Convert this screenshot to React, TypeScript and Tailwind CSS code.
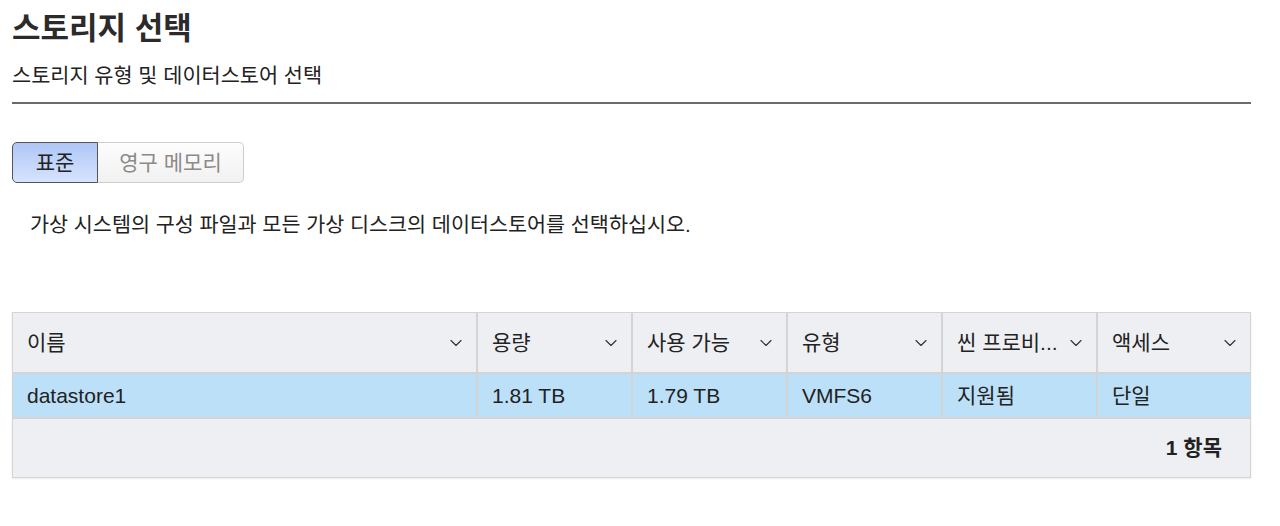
import { ChevronDown } from "lucide-react";

const columns = [
  { label: "이름", width: "w-[465px]" },
  { label: "용량", width: "w-[155px]" },
  { label: "사용 가능", width: "w-[155px]" },
  { label: "유형", width: "w-[155px]" },
  { label: "씬 프로비...", width: "w-[155px]" },
  { label: "액세스", width: "flex-1" },
];

const row = ["datastore1", "1.81 TB", "1.79 TB", "VMFS6", "지원됨", "단일"];

const App = () => {
  return (
    <div
      className="w-[1280px] h-[526px] bg-white text-[#333] overflow-hidden"
      style={{ fontFamily: '"Liberation Sans", "Noto Sans CJK KR", sans-serif' }}
    >
      <div className="pl-3 pr-[29px]">
        <h1 className="pt-[11px] text-[31px] leading-[36px] font-bold text-[#2b2b2b]">
          스토리지 선택
        </h1>
        <p className="mt-[16px] text-[20.8px] leading-[26px] text-[#222]">
          스토리지 유형 및 데이터스토어 선택
        </p>
        <div className="mt-[13px] h-[2px] bg-[#6b6b6b]" />

        <div className="mt-[38px] flex h-[41px] w-[232px] text-[21px]">
          <button className="w-[86px] rounded-l-[5px] border border-[#555] bg-gradient-to-b from-[#aec6f7] to-[#d6e4fc] text-[#222]">
            표준
          </button>
          <button className="flex-1 rounded-r-[5px] border border-l-0 border-[#ccc] bg-gradient-to-b from-[#fdfdfd] to-[#f1f1f1] text-[#8a8a8a]">
            영구 메모리
          </button>
        </div>

        <p className="mt-[29px] pl-[18px] text-[20.7px] leading-[26px] text-[#222]">
          가상 시스템의 구성 파일과 모든 가상 디스크의 데이터스토어를 선택하십시오.
        </p>

        <div className="mt-[74px] border border-[#d4d4d4] bg-[#eeeff2] shadow-[0_1px_2px_rgba(0,0,0,0.08)] text-[21px] text-[#222]">
          <div className="flex h-[59px]">
            {columns.map((c, i) => (
              <div
                key={c.label}
                className={`${c.width} flex items-center justify-between pl-[14px] pr-[10px] ${
                  i < columns.length - 1 ? "border-r-2 border-[#d4d4d4]" : ""
                }`}
              >
                <span>{c.label}</span>
                <ChevronDown size={20} strokeWidth={1.4} className="text-[#333]" />
              </div>
            ))}
          </div>
          <div className="flex h-[47px] border-t-2 border-b-2 border-[#d4d4d4] bg-[#bde0f9]">
            {row.map((v, i) => (
              <div
                key={i}
                className={`${columns[i].width} flex items-center pl-[14px] ${
                  i < row.length - 1 ? "border-r-2 border-[#d4d4d4]" : ""
                }`}
              >
                {v}
              </div>
            ))}
          </div>
          <div className="flex h-[58px] items-center justify-end pr-[28px] font-bold">
            1 항목
          </div>
        </div>
      </div>
    </div>
  );
};

export default App;
